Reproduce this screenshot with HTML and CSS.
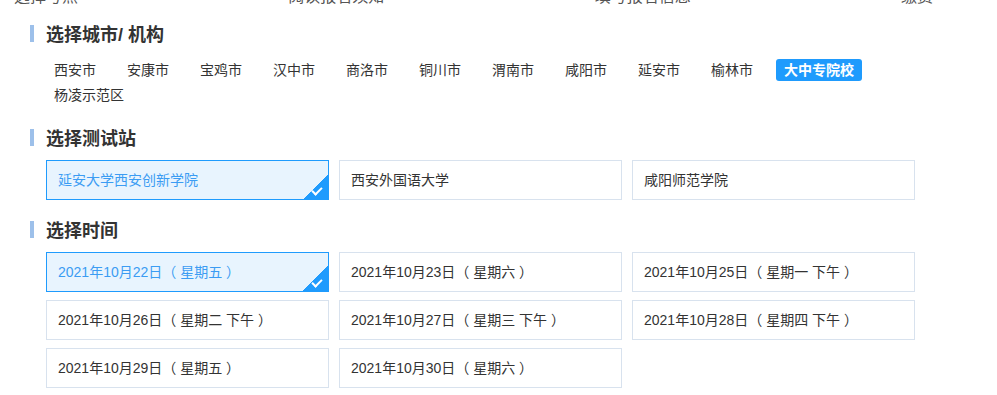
FILE: index.html
```html
<!DOCTYPE html>
<html>
<head>
  <meta charset="utf-8">
  <title>考试报名</title>
  <link rel="stylesheet" href="styles.css">
</head>
<body>
<div class="steps">
  <span>选择考点</span>
  <span>阅读报名须知</span>
  <span>填写报名信息</span>
  <span>缴费</span>
</div>
<div class="main">
  <h3 class="title">选择城市/ 机构</h3>
  <ul class="cities">
    <li>西安市</li>
    <li>安康市</li>
    <li>宝鸡市</li>
    <li>汉中市</li>
    <li>商洛市</li>
    <li>铜川市</li>
    <li>渭南市</li>
    <li>咸阳市</li>
    <li>延安市</li>
    <li>榆林市</li>
    <li class="on">大中专院校</li>
    <li>杨凌示范区</li>
  </ul>

  <h3 class="title">选择测试站</h3>
  <div class="grid">
    <div class="item on">延安大学西安创新学院</div>
    <div class="item">西安外国语大学</div>
    <div class="item">咸阳师范学院</div>
  </div>

  <h3 class="title">选择时间</h3>
  <div class="grid">
    <div class="item on">2021年10月22日（ 星期五 ）</div>
    <div class="item">2021年10月23日（ 星期六 ）</div>
    <div class="item">2021年10月25日（ 星期一 下午 ）</div>
    <div class="item">2021年10月26日（ 星期二 下午 ）</div>
    <div class="item">2021年10月27日（ 星期三 下午 ）</div>
    <div class="item">2021年10月28日（ 星期四 下午 ）</div>
    <div class="item">2021年10月29日（ 星期五 ）</div>
    <div class="item">2021年10月30日（ 星期六 ）</div>
  </div>
</div>
</body>
</html>
```

FILE: styles.css
```css
body {margin:0; background:#fff; color:#333; font-family:"Liberation Sans","Noto Sans CJK SC",sans-serif; font-size:14px;}
ul {list-style:none; margin:0; padding:0;}

.steps {display:flex; justify-content:space-between; margin-top:-11px; padding:0 64px 0 14px; font-size:16px; line-height:16px; color:#555;}

.main {padding:0 0 0 30px;}
.title {display:flex; align-items:center; height:24px; margin:17px 0 11px; font-size:18px; font-weight:bold; color:#333;}
.title:first-child {margin-top:16px;}
.title::before {content:""; width:4px; height:17px; margin-right:12px; background:#9dc0ea;}

.cities {display:flex; flex-wrap:wrap; row-gap:3px; width:850px; margin:14px 0 19px 16px;}
.cities li {height:22px; line-height:22px; padding:0 8px; margin-right:15px; border-radius:3px; white-space:nowrap;}
.cities li.on {background:#1f9bfd; color:#fff; font-weight:bold;}

.grid {display:grid; grid-template-columns:repeat(3,283px); column-gap:10px; row-gap:8px; margin-left:16px;}
.item {position:relative; height:38px; line-height:38px; padding:0 11px; border:1px solid #d8e2ee; white-space:nowrap; overflow:hidden;}
.item.on {border-color:#1f9bfd; background:#e8f4fe; color:#3b9cf3;}
.item.on::before {content:""; position:absolute; right:0; bottom:0; width:25px; height:25px; background:linear-gradient(to bottom right, transparent 50%, #1f9bfd 50%);}
.item.on::after {content:""; position:absolute; right:6px; bottom:6px; width:8px; height:4px; border-left:2px solid #fff; border-bottom:2px solid #fff; transform:rotate(-45deg);}
```
